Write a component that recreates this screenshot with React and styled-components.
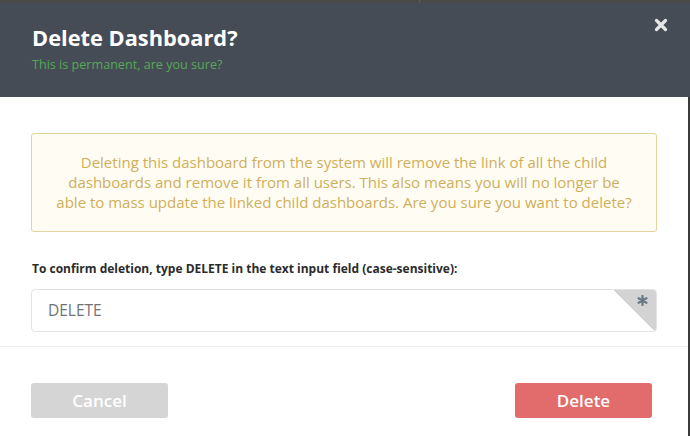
import React from "react";
import styled, { createGlobalStyle } from "styled-components";

const Global = createGlobalStyle`
  html, body { margin: 0; padding: 0; }
  body {
    background: #3b3b3b;
    font-family: "Open Sans", Arial, sans-serif;
    width: 690px;
    height: 436px;
    overflow: hidden;
  }
`;

const Backdrop = styled.div`
  height: 3px;
  background: #4a4a4a;
  display: flex;
`;

const BackdropSeam = styled.div`
  margin-left: 419px;
  width: 1px;
  background: #5e5e5e;
`;

const Modal = styled.div`
  width: 690px;
  display: flex;
  flex-direction: column;
`;

const Header = styled.div`
  position: relative;
  height: 94px;
  background: #464c56;
  padding: 20px 32px 0;
  box-sizing: border-box;
`;

const Title = styled.h1`
  margin: 0;
  color: #ffffff;
  font-size: 21.8px;
  font-weight: 700;
  line-height: 30px;
`;

const Subtitle = styled.p`
  margin: 5px 0 0;
  color: #55a857;
  font-size: 12.6px;
  line-height: 14px;
`;

const Close = styled.button`
  position: absolute;
  top: 13px;
  right: 20px;
  width: 18px;
  height: 18px;
  padding: 0;
  border: 0;
  background: transparent;
  display: flex;
  align-items: center;
  justify-content: center;
`;

const Body = styled.div`
  width: 688px;
  background: #ffffff;
  padding: 36px 31px 0;
  box-sizing: border-box;
  height: 339px;
  display: flex;
  flex-direction: column;
`;

const Warning = styled.div`
  border: 1px solid #e2d3a1;
  background: #fffdf3;
  border-radius: 3px;
  padding: 18px 0 19px;
  color: #cfae5b;
  text-align: center;
  font-size: 15px;
  line-height: 20px;
  white-space: nowrap;
`;

const Label = styled.label`
  margin-top: 29px;
  padding-left: 1px;
  color: #2b2b2b;
  font-size: 12px;
  font-weight: 700;
  line-height: 16px;
`;

const InputWrap = styled.div`
  position: relative;
  margin-top: 12px;
  height: 43px;
  border: 1px solid #e3e3e3;
  border-radius: 4px;
  box-sizing: border-box;
  overflow: hidden;
`;

const Input = styled.input`
  width: 100%;
  height: 100%;
  border: 0;
  outline: none;
  box-sizing: border-box;
  padding: 0 0 2px 16px;
  font-family: inherit;
  font-size: 15.5px;
  color: #6f7378;
  background: transparent;
`;

const Corner = styled.div`
  position: absolute;
  top: 0;
  right: 0;
  width: 43px;
  height: 43px;
  background: linear-gradient(to bottom left, #d3d3d3 50%, transparent 50%);
`;

const Star = styled.svg`
  position: absolute;
  top: 5px;
  right: 8px;
`;

const Divider = styled.div`
  margin: 14px -31px 0;
  height: 1px;
  background: #f0f0f0;
`;

const Footer = styled.div`
  display: flex;
  justify-content: space-between;
  margin-top: 36px;
  padding-right: 5px;
`;

const Button = styled.button`
  width: 137px;
  height: 35px;
  border: 0;
  border-radius: 3px;
  background: ${(p) => (p.$danger ? "#e26b6b" : "#d5d5d5")};
  color: #ffffff;
  font-family: inherit;
  font-size: 17px;
  font-weight: 600;
`;

export default function App() {
  return (
    <>
      <Global />
      <Backdrop>
        <BackdropSeam />
      </Backdrop>
      <Modal>
        <Header>
          <Title>Delete Dashboard?</Title>
          <Subtitle>This is permanent, are you sure?</Subtitle>
          <Close aria-label="Close">
            <svg width="14" height="14" viewBox="0 0 14 14">
              <path
                d="M2.5 2.5 L11.5 11.5 M11.5 2.5 L2.5 11.5"
                stroke="#e6e6e6"
                strokeWidth="3.2"
                strokeLinecap="round"
              />
            </svg>
          </Close>
        </Header>
        <Body>
          <Warning>
            Deleting this dashboard from the system will remove the link of all the child
            <br />
            dashboards and remove it from all users. This also means you will no longer be
            <br />
            able to mass update the linked child dashboards. Are you sure you want to delete?
          </Warning>
          <Label>To confirm deletion, type DELETE in the text input field (case-sensitive):</Label>
          <InputWrap>
            <Input defaultValue="DELETE" />
            <Corner>
              <Star width="11" height="11" viewBox="0 0 12 12">
                <path
                  d="M6 1 V11 M1.7 3.5 L10.3 8.5 M10.3 3.5 L1.7 8.5"
                  stroke="#6a7886"
                  strokeWidth="2.4"
                  strokeLinecap="round"
                />
              </Star>
            </Corner>
          </InputWrap>
          <Divider />
          <Footer>
            <Button>Cancel</Button>
            <Button $danger>Delete</Button>
          </Footer>
        </Body>
      </Modal>
    </>
  );
}
